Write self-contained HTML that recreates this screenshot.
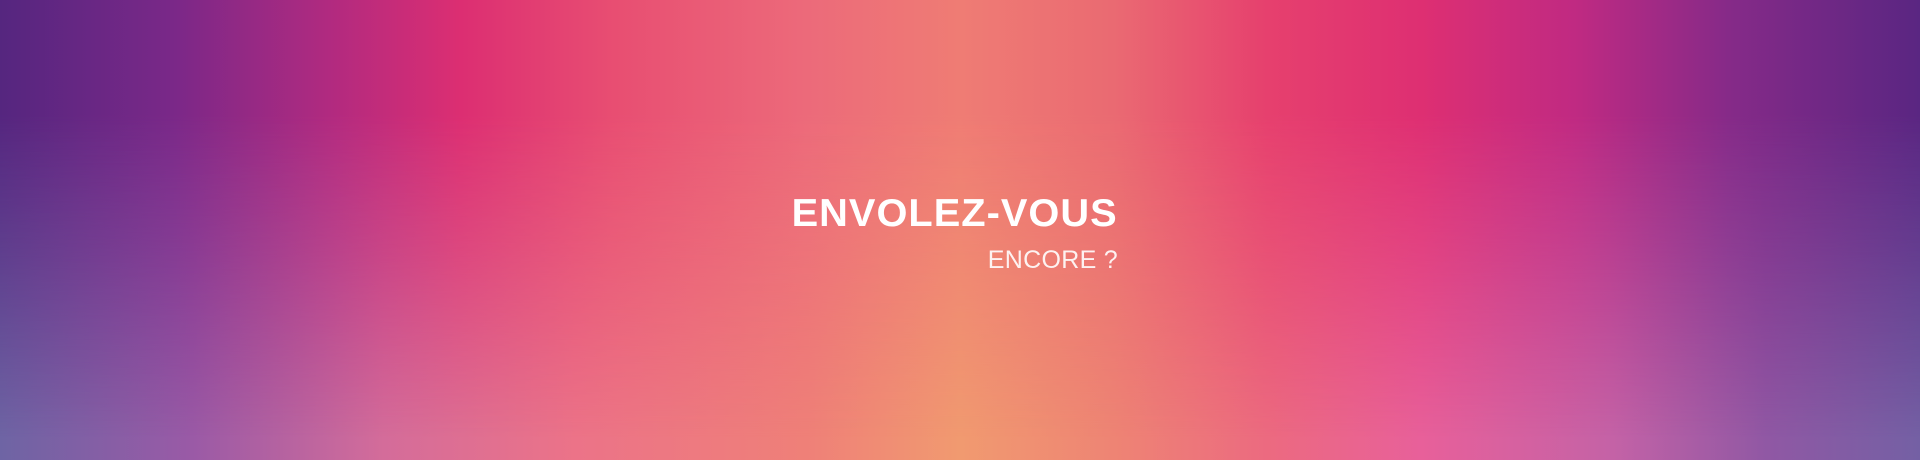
<!DOCTYPE html>
<html><head><meta charset="utf-8"><style>
html,body{margin:0;padding:0;width:1920px;height:460px;overflow:hidden}
.wrap{position:relative;width:1920px;height:460px}
.b,.t{position:absolute;inset:0}
.b{background:linear-gradient(90deg,#6e64a4 0%,#9a5aa6 10%,#d46c9a 20%,#ec7388 30%,#ef8078 42%,#f19a70 50%,#ee8474 58%,#ec6a80 66%,#e8609a 74%,#c462a6 84%,#9058a4 92%,#7460a4 100%)}
.t{background:linear-gradient(90deg,#55267f 0%,#7a2888 9%,#b02a80 17%,#dc2e72 24%,#e84e72 32%,#ec6a7a 42%,#ef7c74 50%,#ea6a72 58%,#e6406e 66%,#de2f72 74%,#c02a82 82%,#862a88 90%,#5a2682 100%);
-webkit-mask-image:linear-gradient(180deg,#000 0%,#000 25%,rgba(0,0,0,.6) 55%,rgba(0,0,0,0) 95%);mask-image:linear-gradient(180deg,#000 0%,#000 25%,rgba(0,0,0,.6) 55%,rgba(0,0,0,0) 95%)}
.h1{position:absolute;right:802px;top:194px;font:bold 39px/1 "Liberation Sans",sans-serif;color:#fff;letter-spacing:1px;transform:scaleX(1.02);transform-origin:right}
.h2{position:absolute;right:802px;top:248px;font:25px/1 "Liberation Sans",sans-serif;color:#fff;font-weight:normal;letter-spacing:0.3px;opacity:.9}
</style></head><body><div class="wrap"><div class="b"></div><div class="t"></div>
<div class="h1">ENVOLEZ-VOUS</div><div class="h2">ENCORE ?</div></div></body></html>
